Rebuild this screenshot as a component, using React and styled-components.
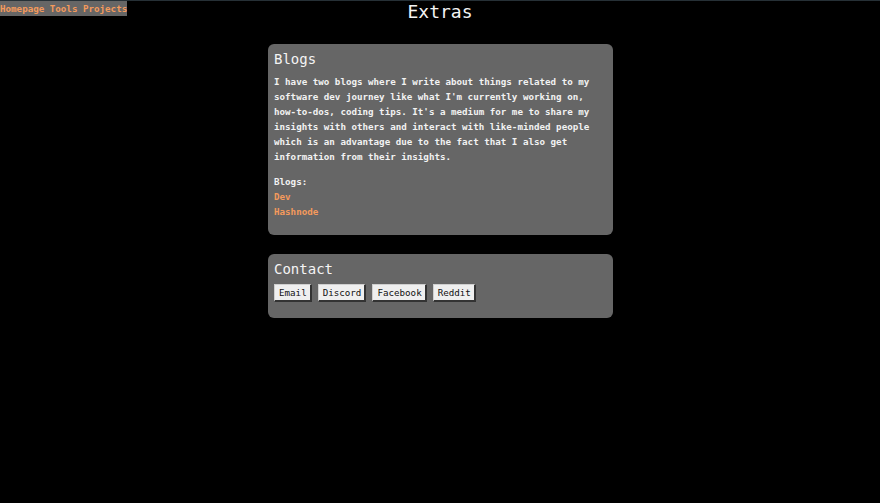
import React from "react";
import styled, { createGlobalStyle } from "styled-components";

const Global = createGlobalStyle`
  html, body { margin: 0; padding: 0; background: #000; }
  body {
    border-top: 1px solid #263036;
    min-height: 502px;
    font-family: "DejaVu Sans Mono", "Liberation Mono", monospace;
    color: #f0f0f0;
  }
`;

const Header = styled.header`
  display: grid;
  grid-template-columns: 1fr auto 1fr;
  align-items: start;
  height: 43px;
`;

const Nav = styled.nav`
  justify-self: start;
  display: flex;
  gap: 5.5px;
  background: #666;
  height: 15px;
  align-items: center;
`;

const NavLink = styled.a`
  color: #f49a5c;
  font-weight: bold;
  font-size: 9.2px;
  text-decoration: none;
`;

const Title = styled.h1`
  margin: 0;
  font-weight: normal;
  font-size: 18px;
  line-height: 22px;
  color: #f4f4f4;
`;

const Main = styled.main`
  display: flex;
  flex-direction: column;
  align-items: center;
  gap: 19px;
  padding-left: 1px;
`;

const Card = styled.section`
  box-sizing: border-box;
  width: 345px;
  background: #666;
  border-radius: 6px;
  padding: 5px 6px ${(p) => p.$bottom}px;
`;

const CardTitle = styled.h2`
  margin: 0;
  font-weight: normal;
  font-size: 14px;
  line-height: 20px;
  color: #f4f4f4;
`;

const Para = styled.p`
  margin: 5px 0 0;
  font-weight: bold;
  font-size: 9.2px;
  line-height: 15px;
  color: #f2f2f2;
`;

const LinkList = styled.div`
  margin-top: 10px;
  display: flex;
  flex-direction: column;
  font-weight: bold;
  font-size: 9.2px;
  line-height: 15px;
`;

const Label = styled.span`
  color: #f2f2f2;
`;

const OrangeLink = styled.a`
  color: #f49a5c;
  text-decoration: none;
  align-self: flex-start;
`;

const Buttons = styled.div`
  margin-top: 5px;
  display: flex;
  gap: 6px;
`;

const Button = styled.button`
  height: 18px;
  padding: 0 3px 0 4px;
  background: #efefef;
  color: #111;
  font-family: "DejaVu Sans Mono", "Liberation Mono", monospace;
  font-size: 9.2px;
  border-style: solid;
  border-width: 1px 2px 2px 1px;
  border-color: #cfcfcf #333 #333 #cfcfcf;
  border-radius: 0;
  cursor: pointer;
`;

export default function App() {
  return (
    <>
      <Global />
      <Header>
        <Nav>
          <NavLink href="#">Homepage</NavLink>
          <NavLink href="#">Tools</NavLink>
          <NavLink href="#">Projects</NavLink>
        </Nav>
        <Title>Extras</Title>
        <div />
      </Header>
      <Main>
        <Card $bottom={16}>
          <CardTitle>Blogs</CardTitle>
          <Para>
            I have two blogs where I write about things related to my software dev journey like what I'm currently working on, how-to-dos, coding tips. It's a medium for me to share my insights with others and interact with like-minded people which is an advantage due to the fact that I also get information from their insights.
          </Para>
          <LinkList>
            <Label>Blogs:</Label>
            <OrangeLink href="#">Dev</OrangeLink>
            <OrangeLink href="#">Hashnode</OrangeLink>
          </LinkList>
        </Card>
        <Card $bottom={16}>
          <CardTitle>Contact</CardTitle>
          <Buttons>
            <Button>Email</Button>
            <Button>Discord</Button>
            <Button>Facebook</Button>
            <Button>Reddit</Button>
          </Buttons>
        </Card>
      </Main>
    </>
  );
}
